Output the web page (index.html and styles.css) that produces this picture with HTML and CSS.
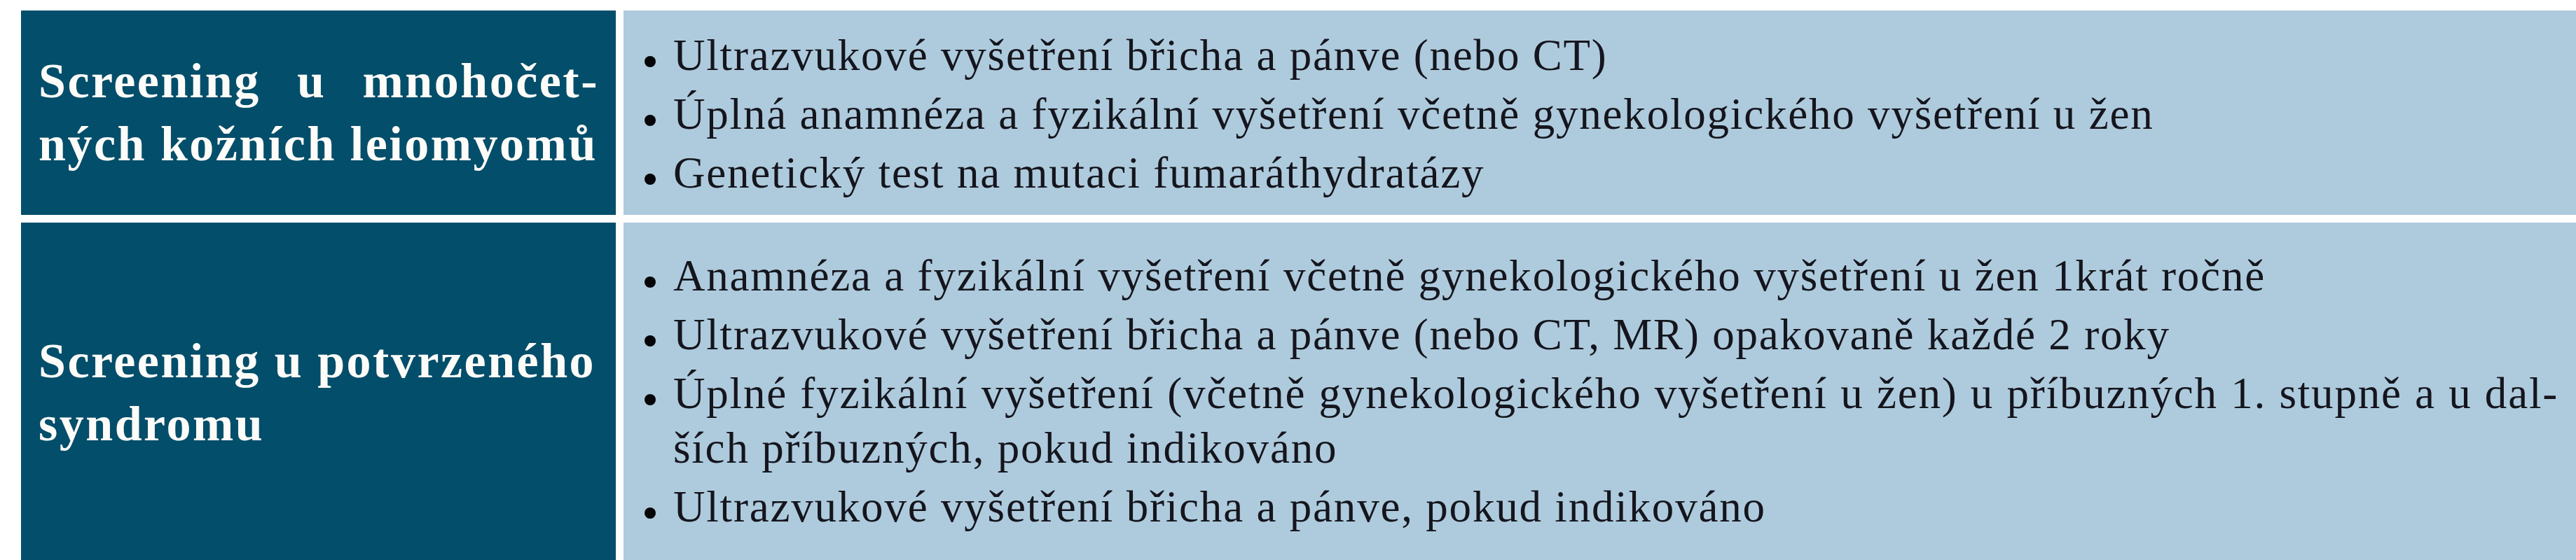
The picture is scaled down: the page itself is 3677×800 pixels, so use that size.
FILE: index.html
```html
<!DOCTYPE html>
<html lang="cs">
<head>
<meta charset="utf-8">
<title>Screening</title>
<link rel="stylesheet" href="styles.css">
</head>
<body>
<div class="table">
  <div class="head">
    <span class="line just">Screening u mnohočet-</span>
    <span class="line">ných kožních leiomyomů</span>
  </div>
  <div class="body r1">
    <ul class="list">
      <li><span class="b"><span class="dot"></span></span><span class="t">Ultrazvukové vyšetření břicha a pánve (nebo CT)</span></li>
      <li><span class="b"><span class="dot"></span></span><span class="t">Úplná anamnéza a fyzikální vyšetření včetně gynekologického vyšetření u žen</span></li>
      <li><span class="b"><span class="dot"></span></span><span class="t">Genetický test na mutaci fumaráthydratázy</span></li>
    </ul>
  </div>
  <div class="head">
    <span class="line">Screening u potvrzeného</span>
    <span class="line">syndromu</span>
  </div>
  <div class="body r2">
    <ul class="list">
      <li><span class="b"><span class="dot"></span></span><span class="t">Anamnéza a fyzikální vyšetření včetně gynekologického vyšetření u žen 1krát ročně</span></li>
      <li><span class="b"><span class="dot"></span></span><span class="t">Ultrazvukové vyšetření břicha a pánve (nebo CT, MR) opakovaně každé 2 roky</span></li>
      <li><span class="b"><span class="dot"></span></span><span class="t"><span class="tl just">Úplné fyzikální vyšetření (včetně gynekologického vyšetření u žen) u příbuzných 1. stupně a u dal-</span><span class="tl">ších příbuzných, pokud indikováno</span></span></li>
      <li><span class="b"><span class="dot"></span></span><span class="t">Ultrazvukové vyšetření břicha a pánve, pokud indikováno</span></li>
    </ul>
  </div>
</div>
</body>
</html>
```

FILE: styles.css
```css
html, body {
  margin: 0;
  padding: 0;
  background: #ffffff;
}

.table {
  display: grid;
  grid-template-columns: 849px 1fr;
  column-gap: 11px;
  row-gap: 11px;
  margin: 15px 0 0 30px;
}

.head {
  background: #034e6b;
  color: #fdfcf8;
  font-family: "Liberation Serif", "Times New Roman", serif;
  font-weight: bold;
  font-size: 70px;
  line-height: 90px;
  letter-spacing: 2.5px;
  padding: 0 24px 0 25px;
  display: flex;
  flex-direction: column;
  justify-content: center;
}

.line {
  display: block;
  white-space: nowrap;
}

.line.just,
.tl.just {
  white-space: normal;
  text-align: justify;
  text-align-last: justify;
}

.body {
  background: #aecbdd;
  color: #15151d;
  font-family: "Liberation Serif", "Times New Roman", serif;
  font-size: 63px;
  line-height: 78px;
  letter-spacing: 1.8px;
  padding: 25px 25px 21px 30px;
}

.body.r2 {
  padding-top: 37px;
  padding-bottom: 40px;
}

.list {
  list-style: none;
  margin: 0;
  padding: 0;
  display: flex;
  flex-direction: column;
  gap: 6px;
}

.list li {
  display: flex;
}

.b {
  flex: none;
  width: 41px;
}

.dot {
  display: inline-block;
  width: 16px;
  height: 16px;
  border-radius: 50%;
  background: #050508;
  vertical-align: 4px;
}

.t {
  flex: 1;
  white-space: nowrap;
}

.tl {
  display: block;
  white-space: nowrap;
}
```
